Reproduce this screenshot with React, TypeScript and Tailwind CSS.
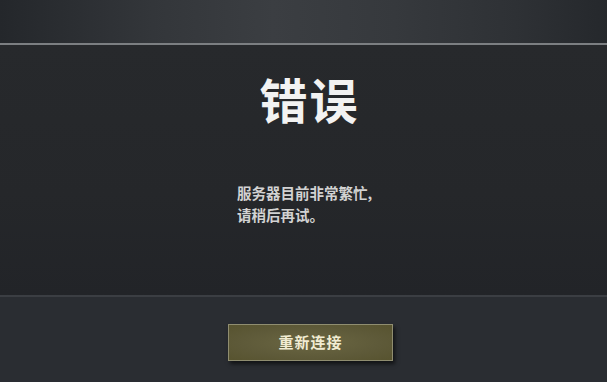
const cjk = { fontFamily: '"Noto Sans CJK SC", "Noto Sans", sans-serif' };

export default function App() {
	return (
		<div className="w-[607px] h-[382px] flex flex-col overflow-hidden bg-[#26282b]" style={cjk}>
			{/* top strip */}
			<div className="h-[43px] shrink-0 bg-[linear-gradient(90deg,#24272b_0%,#33363a_25%,#3b3e42_45%,#36393d_65%,#2e3135_85%,#25282c_100%)]" />
			<div className="h-[2px] shrink-0 bg-[#7c7f82]" />

			{/* main panel */}
			<div className="h-[250px] shrink-0 flex flex-col items-center bg-[linear-gradient(180deg,#27292c_0%,#25272a_60%,#222428_100%)]">
				<h1 className="mt-[23px] ml-[12px] text-[48px] leading-[60px] font-bold text-[#f2f2f2] tracking-[2px]">错误</h1>
				<div className="mt-[54px] ml-[2px] text-[14.5px] leading-[22px] font-bold text-[#d2d2d2]">
					<p>服务器目前非常繁忙,</p>
					<p>请稍后再试。</p>
				</div>
			</div>

			{/* footer */}
			<div className="h-[2px] shrink-0 bg-[#3b3e43]" />
			<div className="flex-1 flex justify-center items-start pt-[27px] bg-[#2a2d32]">
				<button className="w-[165px] h-[37px] ml-[14px] border border-[#8f8d70] bg-[radial-gradient(ellipse_at_center,#6b6743_0%,#5e5a39_60%,#57532f_100%)] shadow-[2px_3px_4px_rgba(0,0,0,0.6)] text-[15px] font-bold text-[#f1ecd2] tracking-[1px]">
					重新连接
				</button>
			</div>
		</div>
	);
}
